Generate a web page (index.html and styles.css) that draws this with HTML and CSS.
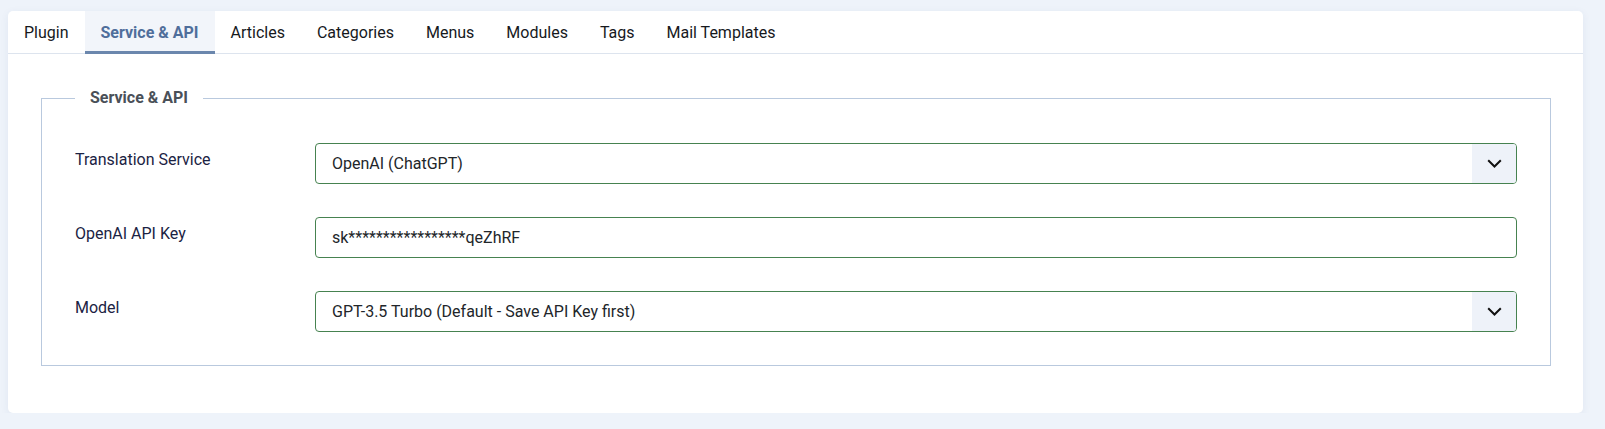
FILE: index.html
```html
<!DOCTYPE html>
<html lang="en">
<head>
  <meta charset="UTF-8" />
  <meta name="viewport" content="width=device-width, initial-scale=1.0" />
  <title>Plugin Options - Service &amp; API</title>
  <link rel="stylesheet" href="styles.css">
</head>
<body>
  <div class="card">
    <div class="tabs">
      <button class="tab" type="button">Plugin</button>
      <button class="tab active" type="button">Service &amp; API</button>
      <button class="tab" type="button">Articles</button>
      <button class="tab" type="button">Categories</button>
      <button class="tab" type="button">Menus</button>
      <button class="tab" type="button">Modules</button>
      <button class="tab" type="button">Tags</button>
      <button class="tab" type="button">Mail Templates</button>
    </div>

    <div class="card-body">
      <fieldset class="options">
        <legend>Service &amp; API</legend>

        <div class="row">
          <label for="service">Translation Service</label>
          <div class="select-wrap">
            <select id="service">
              <option>OpenAI (ChatGPT)</option>
              <option>DeepL</option>
              <option>Google Translate</option>
            </select>
            <span class="caret">
              <svg width="15" height="9" viewBox="0 0 15 9"><path d="M1.2 1.2l6.3 6.3 6.3-6.3" fill="none" stroke="#111" stroke-width="2"/></svg>
            </span>
          </div>
        </div>

        <div class="row">
          <label for="apikey">OpenAI API Key</label>
          <input type="text" id="apikey" class="field" value="sk*****************qeZhRF">
        </div>

        <div class="row">
          <label for="model">Model</label>
          <div class="select-wrap">
            <select id="model">
              <option>GPT-3.5 Turbo (Default - Save API Key first)</option>
            </select>
            <span class="caret">
              <svg width="15" height="9" viewBox="0 0 15 9"><path d="M1.2 1.2l6.3 6.3 6.3-6.3" fill="none" stroke="#111" stroke-width="2"/></svg>
            </span>
          </div>
        </div>
      </fieldset>
    </div>
  </div>
</body>
</html>
```

FILE: styles.css
```css
body {
  font-family: Roboto, 'Liberation Sans', sans-serif;
  font-size: 16px;
  background: #eef3fa;
  margin: 0;
  padding: 11px 22px 0 8px;
}
.card {
  background: #fff;
  border-radius: 5px;
  box-shadow: 0 2px 8px rgba(40, 70, 130, 0.07);
  height: 402px;
}
.tabs {
  display: flex;
  border-bottom: 1px solid #dde4ee;
}
.tab {
  font-family: inherit;
  font-size: 16px;
  line-height: 24px;
  color: #16191d;
  background: none;
  border: none;
  border-bottom: 3px solid transparent;
  margin-bottom: -1px;
  padding: 10px 16px 6px;
  cursor: pointer;
}
.tab.active {
  background: #f2f5fa;
  color: #4f6e9b;
  font-weight: 700;
  border-bottom-color: #6b87ad;
}
.card-body {
  padding: 32px 32px 0 33px;
}
.options {
  margin: 0;
  border: 1px solid #b9c9de;
  padding: 33px;
}
.options legend {
  padding: 0 15px;
  font-weight: 700;
  line-height: 24px;
  color: #4a5058;
}
.row {
  display: flex;
  align-items: flex-start;
}
.row + .row {
  margin-top: 33px;
}
.row label {
  width: 240px;
  flex: none;
  padding-top: 5px;
  line-height: 24px;
  color: #1b2343;
}
.field,
.select-wrap {
  flex: 1;
  height: 41px;
  box-sizing: border-box;
  border: 1px solid #468250;
  border-radius: 4px;
}
.field {
  font-family: inherit;
  font-size: 16px;
  color: #22262a;
  padding: 0 16px;
  outline: none;
}
.select-wrap {
  display: flex;
  overflow: hidden;
}
.select-wrap select {
  flex: 1;
  appearance: none;
  border: none;
  background: transparent;
  font-family: inherit;
  font-size: 16px;
  color: #22262a;
  padding: 0 16px;
  outline: none;
}
.caret {
  width: 44px;
  flex: none;
  background: #eef2f9;
  display: flex;
  align-items: center;
  justify-content: center;
}
```
